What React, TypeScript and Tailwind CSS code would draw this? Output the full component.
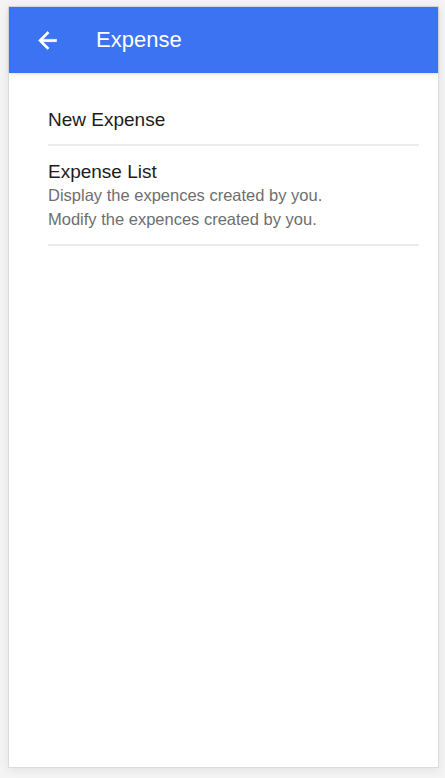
import React from 'react'

const ITEMS = [
  { title: 'New Expense', lines: [] as string[] },
  {
    title: 'Expense List',
    lines: ['Display the expences created by you.', 'Modify the expences created by you.'],
  },
]

const BackArrow: React.FC = () => (
  <svg viewBox="0 0 24 24" className="h-[27px] w-[27px]" fill="white" stroke="white" strokeWidth="0.6">
    <path d="M20 11H7.83l5.59-5.59L12 4l-8 8 8 8 1.41-1.41L7.83 13H20v-2z" />
  </svg>
)

export default function App() {
  return (
    <div className="min-h-[778px] bg-[#f4f4f4] pt-[6px] pl-[8px]" style={{ fontFamily: '"Liberation Sans", Arial, sans-serif' }}>
      <div className="w-[431px] h-[762px] bg-white border border-[#dcdcdc] shadow-[0_2px_10px_rgba(0,0,0,0.08)] flex flex-col">
        <header className="h-[66px] bg-[#3b73f3] flex items-center shadow-[0_1px_3px_rgba(0,0,0,0.15)]">
          <button className="ml-[25px] w-[27px] h-[27px] flex items-center justify-center">
            <BackArrow />
          </button>
          <h1 className="ml-[35px] text-[22px] text-white leading-none">Expense</h1>
        </header>

        <ul className="pt-[21px] pl-[39px] pr-[19px]">
          {ITEMS.map((item) => (
            <li key={item.title} className="pt-[15px] pb-[13px] border-b-2 border-[#ececec] cursor-pointer">
              <div className="text-[19px] leading-[22px] text-[#1c1c1c]">{item.title}</div>
              {item.lines.map((l) => (
                <div key={l} className="text-[16.5px] leading-[24px] text-[#6e6e6e]">
                  {l}
                </div>
              ))}
            </li>
          ))}
        </ul>
      </div>
    </div>
  )
}
